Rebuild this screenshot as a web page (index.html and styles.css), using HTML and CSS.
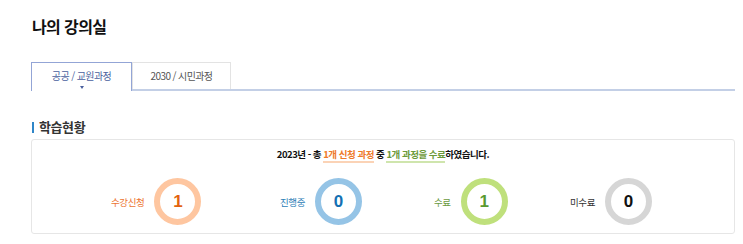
FILE: index.html
```html
<!DOCTYPE html>
<html lang="ko">
<head>
  <meta charset="UTF-8" />
  <meta name="viewport" content="width=device-width, initial-scale=1.0" />
  <title>나의 강의실</title>
  <link rel="stylesheet" href="styles.css">
</head>
<body>
  <div class="page">
    <h1 class="page-title">나의 강의실</h1>

    <div class="tabs">
      <div class="tab active">공공 / 교원과정</div>
      <div class="tab">2030 / 시민과정</div>
    </div>

    <h2 class="section-title">학습현황</h2>

    <div class="status-box">
      <p class="summary">
        2023년 - 총 <span class="hl-orange">1개 신청 과정</span> 중 <span class="hl-green">1개 과정을 수료</span>하였습니다.
      </p>
      <div class="stats">
        <div class="stat orange">
          <span class="stat-label">수강신청</span>
          <span class="stat-ring">1</span>
        </div>
        <div class="stat blue">
          <span class="stat-label">진행중</span>
          <span class="stat-ring">0</span>
        </div>
        <div class="stat green">
          <span class="stat-label">수료</span>
          <span class="stat-ring">1</span>
        </div>
        <div class="stat gray">
          <span class="stat-label">미수료</span>
          <span class="stat-ring">0</span>
        </div>
      </div>
    </div>
  </div>
</body>
</html>
```

FILE: styles.css
```css
body {
  margin: 0;
  font-family: "Noto Sans CJK KR", "Noto Sans", sans-serif;
  color: #222;
  background: #fff;
}

.page {
  padding: 14px 8px 0 31px;
}

.page-title {
  margin: 0 0 0 1px;
  font-size: 16px;
  font-weight: bold;
  letter-spacing: -0.6px;
  line-height: 24px;
  color: #111;
}

.tabs {
  display: flex;
  margin-top: 24px;
  border-bottom: 2px solid #c3cfe6;
}

.tab {
  width: 99px;
  height: 27px;
  box-sizing: border-box;
  border: 1px solid #e3e3e3;
  border-bottom: none;
  font-size: 10px;
  letter-spacing: -0.6px;
  line-height: 25px;
  text-align: center;
  color: #555;
  position: relative;
}

.tab.active {
  width: 101px;
  height: 29px;
  margin-bottom: -2px;
  border-color: #93a5d6;
  color: #4a5f9e;
  background: #fff;
}

.tab.active::after {
  content: "";
  position: absolute;
  left: 48px;
  bottom: 2px;
  border-left: 2.5px solid transparent;
  border-right: 2.5px solid transparent;
  border-top: 3px solid #4a5f9e;
}

.section-title {
  margin: 27px 0 0 1px;
  padding-left: 7px;
  font-size: 13px;
  font-weight: bold;
  letter-spacing: -0.4px;
  line-height: 18px;
  color: #333;
  position: relative;
}

.section-title::before {
  content: "";
  position: absolute;
  left: 0;
  top: 4px;
  width: 2px;
  height: 11px;
  background: #2f86c8;
}

.status-box {
  margin-top: 3px;
  height: 95px;
  box-sizing: border-box;
  border: 1px solid #e6e6e6;
  border-radius: 3px;
}

.summary {
  margin: 7px 0 0;
  font-size: 9.5px;
  font-weight: bold;
  letter-spacing: -0.5px;
  text-align: center;
  line-height: 14px;
  color: #111;
}

.hl-orange {
  color: #ee7a2a;
  border-bottom: 2px solid #fbd3b6;
}

.hl-green {
  color: #6c9a3a;
  border-bottom: 2px solid #cfe5ad;
}

.stats {
  display: grid;
  grid-template-columns: 169px 154px 136px auto;
  padding-left: 79px;
  margin-top: 17px;
}

.stat {
  display: flex;
  align-items: center;
  gap: 10px;
}

.stat-label {
  font-size: 9.5px;
  letter-spacing: -0.4px;
}

.stat-ring {
  width: 47px;
  height: 47px;
  box-sizing: border-box;
  border: 6px solid;
  border-radius: 50%;
  display: flex;
  align-items: center;
  justify-content: center;
  font-family: "Liberation Sans", Arial, sans-serif;
  font-size: 17px;
  font-weight: bold;
}

.orange .stat-label { color: #ec7430; }
.orange .stat-ring { border-color: #fec6a0; color: #e3630f; }

.blue .stat-label { color: #2c7db6; }
.blue .stat-ring { border-color: #95c4e6; color: #1470b3; }

.green .stat-label { color: #6b9a3f; }
.green .stat-ring { border-color: #bfe07c; color: #5a9a30; }

.gray .stat-label { color: #333; }
.gray .stat-ring { border-color: #d6d6d6; color: #111; }
```
